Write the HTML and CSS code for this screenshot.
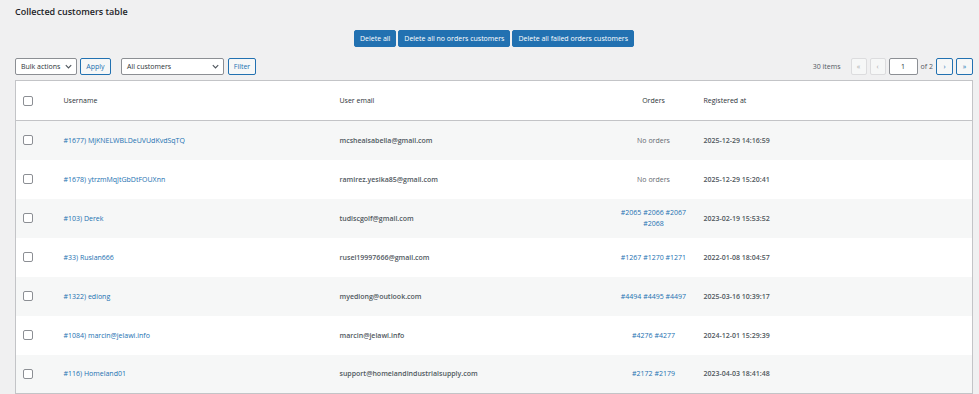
FILE: index.html
```html
<!DOCTYPE html>
<html>
<head>
<meta charset="utf-8">
<link rel="stylesheet" href="styles.css">
</head>
<body>
<div class="wrap">
  <h1 class="title">Collected customers table</h1>
  <div class="actions">
    <button class="btn-primary">Delete all</button>
    <button class="btn-primary">Delete all no orders customers</button>
    <button class="btn-primary">Delete all failed orders customers</button>
  </div>
  <div class="tablenav">
    <div class="nav-left">
      <div class="select sel-bulk">Bulk actions<svg class="chev" viewBox="0 0 10 10"><path d="M2 3.5 L5 6.5 L8 3.5" fill="none" stroke="#50575e" stroke-width="1.3"/></svg></div>
      <button class="btn-sec btn-apply">Apply</button>
      <div class="select sel-cust">All customers<svg class="chev" viewBox="0 0 10 10"><path d="M2 3.5 L5 6.5 L8 3.5" fill="none" stroke="#50575e" stroke-width="1.3"/></svg></div>
      <button class="btn-sec btn-filter">Filter</button>
    </div>
    <div class="nav-right">
      <span class="count">30 items</span>
      <span class="pg disabled">«</span>
      <span class="pg disabled">‹</span>
      <span class="pg-input">1</span>
      <span class="of">of 2</span>
      <span class="pg active">›</span>
      <span class="pg active">»</span>
    </div>
  </div>
  <table class="tbl">
    <thead>
      <tr>
        <th class="c-cb"><span class="cb"></span></th>
        <th class="c-user">Username</th>
        <th class="c-email">User email</th>
        <th class="c-orders">Orders</th>
        <th class="c-date">Registered at</th>
      </tr>
    </thead>
    <tbody>
      <tr>
        <td class="c-cb"><span class="cb"></span></td>
        <td class="c-user"><a>#1677) MjKNELWBLDeUVUdKvdSqTQ</a></td>
        <td class="c-email">mcsheaisabella@gmail.com</td>
        <td class="c-orders"><span class="none">No orders</span></td>
        <td class="c-date">2025-12-29 14:16:59</td>
      </tr>
      <tr>
        <td class="c-cb"><span class="cb"></span></td>
        <td class="c-user"><a>#1678) ytrzmMqJtGbDtFOUXnn</a></td>
        <td class="c-email">ramirez.yesika85@gmail.com</td>
        <td class="c-orders"><span class="none">No orders</span></td>
        <td class="c-date">2025-12-29 15:20:41</td>
      </tr>
      <tr>
        <td class="c-cb"><span class="cb"></span></td>
        <td class="c-user"><a>#103) Derek</a></td>
        <td class="c-email">tudiscgolf@gmail.com</td>
        <td class="c-orders"><a>#2065</a> <a>#2066</a> <a>#2067</a> <a>#2068</a></td>
        <td class="c-date">2023-02-19 15:53:52</td>
      </tr>
      <tr>
        <td class="c-cb"><span class="cb"></span></td>
        <td class="c-user"><a>#33) Ruslan666</a></td>
        <td class="c-email">rusel19997666@gmail.com</td>
        <td class="c-orders"><a>#1267</a> <a>#1270</a> <a>#1271</a></td>
        <td class="c-date">2022-01-08 18:04:57</td>
      </tr>
      <tr>
        <td class="c-cb"><span class="cb"></span></td>
        <td class="c-user"><a>#1322) ediong</a></td>
        <td class="c-email">myediong@outlook.com</td>
        <td class="c-orders"><a>#4494</a> <a>#4495</a> <a>#4497</a></td>
        <td class="c-date">2025-03-16 10:39:17</td>
      </tr>
      <tr>
        <td class="c-cb"><span class="cb"></span></td>
        <td class="c-user"><a>#1084) marcin@jelawi.info</a></td>
        <td class="c-email">marcin@jelawi.info</td>
        <td class="c-orders"><a>#4276</a> <a>#4277</a></td>
        <td class="c-date">2024-12-01 15:29:39</td>
      </tr>
      <tr>
        <td class="c-cb"><span class="cb"></span></td>
        <td class="c-user"><a>#116) Homeland01</a></td>
        <td class="c-email">support@homelandindustrialsupply.com</td>
        <td class="c-orders"><a>#2172</a> <a>#2179</a></td>
        <td class="c-date">2023-04-03 18:41:48</td>
      </tr>
    </tbody>
  </table>
</div>
</body>
</html>
```

FILE: styles.css
```css
* { box-sizing: border-box; }
html, body { margin: 0; padding: 0; }
body {
  background: #f0f0f1;
  font-family: "Open Sans", "Noto Sans", sans-serif;
  font-size: 7px;
  color: #3c434a;
  width: 979px;
  height: 394px;
  overflow: hidden;
}
.wrap { padding: 0 6px 0 15px; }
.title {
  margin: 0;
  padding-top: 5px;
  height: 30px;
  font-size: 9px;
  font-weight: 600;
  color: #1d2327;
  line-height: 13px;
}
.actions {
  display: flex;
  justify-content: center;
  align-items: flex-start;
  gap: 2px;
  height: 28px;
}
button { font-family: inherit; margin: 0; white-space: nowrap; }
.btn-primary {
  height: 17px;
  background: #2271b1;
  border: 1px solid #2271b1;
  border-radius: 2px;
  color: #fff;
  font-size: 7px;
  padding: 0 5px;
  line-height: 15px;
}
.tablenav {
  display: flex;
  justify-content: space-between;
  align-items: center;
  height: 17px;
  white-space: nowrap;
}
.nav-left, .nav-right { display: flex; align-items: center; }
.select {
  height: 17px;
  background: #fff;
  border: 1px solid #8c8f94;
  border-radius: 2px;
  color: #2c3338;
  display: flex;
  align-items: center;
  justify-content: space-between;
  padding: 0 3px 0 5px;
}
.chev { width: 9px; height: 9px; }
.sel-bulk { width: 62px; }
.sel-cust { width: 103px; margin-left: 10px; }
.btn-sec {
  height: 17px;
  background: #f6f7f7;
  border: 1px solid #2271b1;
  border-radius: 2px;
  color: #2271b1;
  font-size: 7px;
  padding: 0;
}
.btn-apply { margin-left: 3px; width: 31px; }
.btn-filter { margin-left: 4px; width: 28px; }
.count { color: #50575e; margin-right: 7px; }
.pg {
  width: 16px;
  height: 17px;
  border-radius: 2px;
  display: flex;
  align-items: center;
  justify-content: center;
  font-size: 7px;
  margin-left: 3px;
}
.pg.disabled { background: #f6f7f7; border: 1px solid #dcdcde; color: #a7aaad; }
.pg.active { background: #f6f7f7; border: 1px solid #2271b1; color: #2271b1; width: 17px; }
.pg-input {
  width: 29px; height: 17px; margin-left: 3px;
  background: #fff; border: 1px solid #8c8f94; border-radius: 2px;
  display: flex; align-items: center; justify-content: center; color: #2c3338;
}
.of { color: #50575e; margin: 0 0 0 3px; }
.tbl {
  margin-top: 5px;
  width: 958px;
  border-collapse: collapse;
  background: #fff;
  border: 1px solid #c3c4c7;
  table-layout: fixed;
}
.tbl th, .tbl td { padding: 0 10px; text-align: left; vertical-align: middle; }
.tbl th { height: 40px; font-weight: 400; color: #2c3338; border-bottom: 1px solid #c3c4c7; }
.tbl td { height: 39px; line-height: 11px; }
.tbl tbody tr:nth-child(odd) { background: #f6f7f7; }
.c-cb { width: 38px; padding: 0 0 0 7px !important; }
.c-user { width: 276px; }
.c-email { width: 284px; }
.c-orders { width: 80px; text-align: center !important; padding: 0 4px !important; }
.c-date { width: auto; }
td.c-email { font-weight: 600; color: #50575e; }
td.c-date { font-weight: 600; color: #50575e; }
a { color: #2271b1; }
.none { color: #646970; }
.cb {
  display: block; width: 10px; height: 10px;
  border: 1px solid #8c8f94; border-radius: 2px; background: #fff;
}
```
